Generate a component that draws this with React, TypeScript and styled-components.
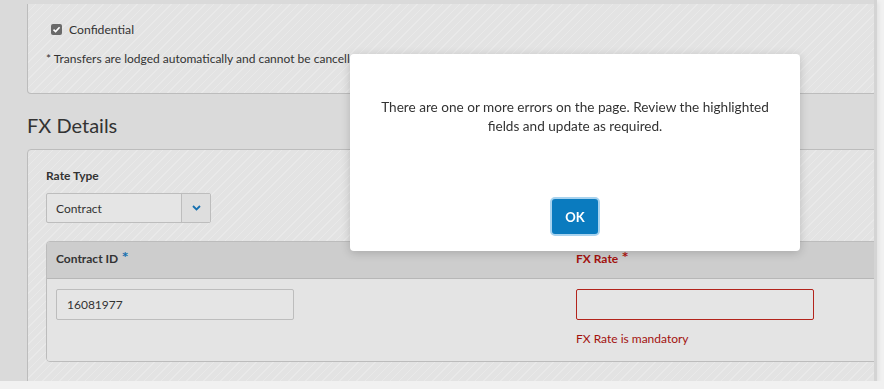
import React from 'react';
import styled, { createGlobalStyle } from 'styled-components';

const GlobalStyle = createGlobalStyle`
  html, body {
    margin: 0;
    padding: 0;
    background: #f1f1f1;
  }
  body {
    font-family: Lato, "Open Sans", sans-serif;
    color: #333333;
  }
  * { box-sizing: border-box; }
`;

const hatch = `
  background-color: #e3e3e3;
  background-image: repeating-linear-gradient(
    135deg,
    rgba(255, 255, 255, 0) 0px,
    rgba(255, 255, 255, 0) 5px,
    rgba(255, 255, 255, 0.22) 5px,
    rgba(255, 255, 255, 0.22) 6px
  );
`;

const Page = styled.div`
  width: 877px;
  height: 381px;
  background: #dadada;
  padding: 4px 0 0 27px;
  border-right: 3px solid #d4d4d4;
  overflow: hidden;
  box-shadow: 2px 2px 4px rgba(0, 0, 0, 0.06);
`;

const Viewport = styled.div`
  width: 847px;
  height: 100%;
  overflow: hidden;
`;

const Panel = styled.div<{ $cut?: boolean }>`
  ${hatch}
  width: 880px;
  border: 1px solid #bcbcbc;
  border-top: ${(p) => (p.$cut ? 'none' : '1px solid #bcbcbc')};
  border-radius: ${(p) => (p.$cut ? '0 0 4px 4px' : '4px')};
  padding: ${(p) => (p.$cut ? '19px 18px 0 18px' : '17px 18px 0 18px')};
  height: ${(p) => (p.$cut ? '90px' : '260px')};
`;

const CheckRow = styled.label`
  display: flex;
  align-items: center;
  gap: 7px;
  font-size: 12.2px;
  padding-left: 5px;
  height: 12px;
`;

const Checkbox = styled.span`
  width: 11px;
  height: 11px;
  border-radius: 2px;
  background: #6a6a6a;
  display: flex;
  align-items: center;
  justify-content: center;
`;

const Note = styled.div`
  font-size: 12px;
  margin-top: 16px;
  white-space: nowrap;
`;

const SectionTitle = styled.h2`
  margin: 17px 0 10px;
  font-size: 20px;
  font-weight: 400;
  line-height: 28px;
  color: #333;
`;

const FieldLabel = styled.div`
  font-size: 12px;
  font-weight: 700;
  line-height: 18px;
  color: #333;
`;

const Select = styled.div`
  margin-top: 8px;
  width: 165px;
  height: 30px;
  display: flex;
  border: 1px solid #bdbdbd;
  border-radius: 2px;
  background: #e5e5e5;
  font-size: 12px;
`;

const SelectValue = styled.div`
  flex: 1;
  display: flex;
  align-items: center;
  padding-left: 9px;
`;

const SelectButton = styled.div`
  width: 29px;
  border-left: 1px solid #bdbdbd;
  background: #dedede;
  display: flex;
  align-items: center;
  justify-content: center;
`;

const Table = styled.div`
  margin-top: 18px;
  border: 1px solid #bcbcbc;
  border-radius: 4px 0 0 4px;
  overflow: hidden;
`;

const Row = styled.div<{ $head?: boolean }>`
  display: grid;
  grid-template-columns: 520px 1fr;
  padding-left: 9px;
  background: ${(p) => (p.$head ? '#cdcdcd' : '#e4e4e4')};
  border-bottom: ${(p) => (p.$head ? '1px solid #b7b7b7' : 'none')};
  height: ${(p) => (p.$head ? '37px' : '82px')};
  align-items: ${(p) => (p.$head ? 'center' : 'start')};
  padding-top: ${(p) => (p.$head ? '0' : '10px')};
`;

const HeadCell = styled.div<{ $error?: boolean }>`
  font-size: 12px;
  font-weight: 700;
  line-height: 16px;
  color: ${(p) => (p.$error ? '#a3120f' : '#333')};
  padding-bottom: 2px;
`;

const Star = styled.span<{ $error?: boolean }>`
  color: ${(p) => (p.$error ? '#b0150f' : '#1670b0')};
  font-family: "DejaVu Sans", sans-serif;
  font-size: 11px;
  font-weight: 700;
  margin-left: 4px;
  line-height: 0;
  vertical-align: 3px;
`;

const Input = styled.div<{ $error?: boolean }>`
  width: 238px;
  height: 31px;
  border: 1px solid ${(p) => (p.$error ? '#b3241c' : '#bdbdbd')};
  border-radius: 2px;
  background: #e5e5e5;
  font-size: 12px;
  display: flex;
  align-items: center;
  padding-left: 10px;
`;

const ErrorText = styled.div`
  margin-top: 11px;
  font-size: 12px;
  color: #a3120f;
`;

const Overlay = styled.div`
  position: fixed;
  inset: 0;
`;

const Modal = styled.div`
  position: absolute;
  left: 350px;
  top: 54px;
  width: 450px;
  height: 197px;
  background: #ffffff;
  border-radius: 4px;
  box-shadow: 0 2px 10px rgba(0, 0, 0, 0.18);
  display: flex;
  flex-direction: column;
  align-items: center;
  padding: 44px 20px 15px;
`;

const Message = styled.p`
  margin: 0;
  flex: 1;
  text-align: center;
  font-size: 13.6px;
  line-height: 19px;
  color: #333;
`;

const OkButton = styled.button`
  width: 50px;
  height: 39px;
  border: 2px solid #a8d3ef;
  border-radius: 5px;
  background: #0a7bbf;
  color: #ffffff;
  font-family: inherit;
  font-size: 13px;
  font-weight: 700;
  cursor: pointer;
`;

export default function App() {
  return (
    <>
      <GlobalStyle />
      <Page>
        <Viewport>
          <Panel $cut>
            <CheckRow>
              <Checkbox>
                <svg width="9" height="9" viewBox="0 0 9 9">
                  <path d="M1.5 4.6 L3.6 6.6 L7.6 2.2" fill="none" stroke="#fff" strokeWidth="1.6" />
                </svg>
              </Checkbox>
              Confidential
            </CheckRow>
            <Note>* Transfers are lodged automatically and cannot be cancelled once submitted.</Note>
          </Panel>
          <SectionTitle>FX Details</SectionTitle>
          <Panel>
            <FieldLabel>Rate Type</FieldLabel>
            <Select>
              <SelectValue>Contract</SelectValue>
              <SelectButton>
                <svg width="9" height="6" viewBox="0 0 9 6">
                  <path d="M1 1 L4.5 4.5 L8 1" fill="none" stroke="#1670b0" strokeWidth="1.8" />
                </svg>
              </SelectButton>
            </Select>
            <Table>
              <Row $head>
                <HeadCell>
                  Contract ID<Star>*</Star>
                </HeadCell>
                <HeadCell $error>
                  FX Rate<Star $error>*</Star>
                </HeadCell>
              </Row>
              <Row>
                <div>
                  <Input>16081977</Input>
                </div>
                <div>
                  <Input $error />
                  <ErrorText>FX Rate is mandatory</ErrorText>
                </div>
              </Row>
            </Table>
          </Panel>
        </Viewport>
      </Page>
      <Overlay>
        <Modal role="dialog">
          <Message>
            There are one or more errors on the page. Review the highlighted fields and update as required.
          </Message>
          <OkButton>OK</OkButton>
        </Modal>
      </Overlay>
    </>
  );
}
